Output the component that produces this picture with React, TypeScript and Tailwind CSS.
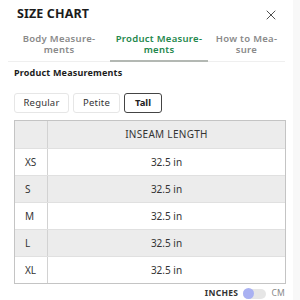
import { X } from "lucide-react"

const rows = [
  { size: "XS", value: "32.5 in" },
  { size: "S", value: "32.5 in" },
  { size: "M", value: "32.5 in" },
  { size: "L", value: "32.5 in" },
  { size: "XL", value: "32.5 in" },
]

const App = () => {
  return (
    <div
      className="w-[300px] h-[300px] overflow-hidden bg-white flex text-[#222]"
      style={{ fontFamily: "'Noto Sans', 'Open Sans', sans-serif" }}
    >
      <div className="w-[293px] h-full bg-white flex flex-col">
        {/* header */}
        <div className="flex items-center justify-between pl-[17px] pr-[14px] pt-[5px] h-[25px]">
          <h1 className="text-[12.5px] font-bold tracking-[0.01em] text-[#1c1c1c]">SIZE CHART</h1>
          <X size={16} strokeWidth={1.3} className="text-[#333]" />
        </div>

        {/* tabs */}
        <div className="flex mt-[8px] ml-[8px] mr-[8px] border-b border-[#efefef] h-[31px]">
          <div className="w-[102px] flex flex-col items-center pt-[1px] text-[9.5px] leading-[11px] font-semibold text-[#8a8a8a] tracking-[0.03em]">
            <span>Body Measure-</span>
            <span>ments</span>
          </div>
          <div className="w-[98px] flex flex-col items-center pt-[1px] text-[9.5px] leading-[11px] font-semibold text-[#23874c] tracking-[0.03em] border-b-2 border-[#b3b8b3] -mb-px">
            <span>Product Measure-</span>
            <span>ments</span>
          </div>
          <div className="flex-1 flex flex-col items-center pt-[1px] text-[9.5px] leading-[11px] font-semibold text-[#8a8a8a] tracking-[0.03em]">
            <span>How to Mea-</span>
            <span>sure</span>
          </div>
        </div>

        <h2 className="ml-[14px] mt-[4px] text-[9px] font-bold tracking-[0.02em] text-[#1c1c1c]">
          Product Measurements
        </h2>

        {/* fits */}
        <div className="flex gap-[4px] ml-[14px] mt-[14px]">
          <button className="w-[55px] h-[20px] rounded-[3px] border border-[#e6e6e6] text-[9.5px] text-[#333] tracking-[0.02em]">
            Regular
          </button>
          <button className="w-[47px] h-[20px] rounded-[3px] border border-[#e6e6e6] text-[9.5px] text-[#333] tracking-[0.02em]">
            Petite
          </button>
          <button className="w-[38px] h-[20px] rounded-[3px] border border-[#444] text-[9.5px] font-bold text-[#222]">
            Tall
          </button>
        </div>

        {/* table */}
        <div className="ml-[14px] mr-[7px] mt-[7px] border border-[#c4c4c4] text-[10px] text-[#333]">
          <div className="flex h-[27px] bg-[#ececec]">
            <div className="w-[33px] border-r border-[#d2d2d2]" />
            <div className="flex-1 flex items-center justify-center tracking-[0.03em]">INSEAM LENGTH</div>
          </div>
          {rows.map((r, i) => (
            <div
              key={r.size}
              className={`flex h-[27px] border-t border-[#e0e0e0] ${i % 2 === 1 ? "bg-[#ececec]" : "bg-white"}`}
            >
              <div className="w-[33px] border-r border-[#d2d2d2] flex items-center pl-[10px]">{r.size}</div>
              <div className="flex-1 flex items-center justify-center">{r.value}</div>
            </div>
          ))}
        </div>

        {/* units */}
        <div className="flex items-center justify-end gap-[5px] mr-[8px] mt-[3px]">
          <span className="text-[8.5px] font-bold tracking-[0.04em] text-[#333]">INCHES</span>
          <div className="w-[23px] h-[10px] rounded-full bg-[#e6e6e6] flex items-center">
            <div className="w-[11px] h-[11px] rounded-full bg-[#a9b1f2]" />
          </div>
          <span className="text-[8.5px] tracking-[0.03em] text-[#888]">CM</span>
        </div>
      </div>
      <div className="flex-1 bg-[#f8f8f8]" />
    </div>
  )
}

export default App
